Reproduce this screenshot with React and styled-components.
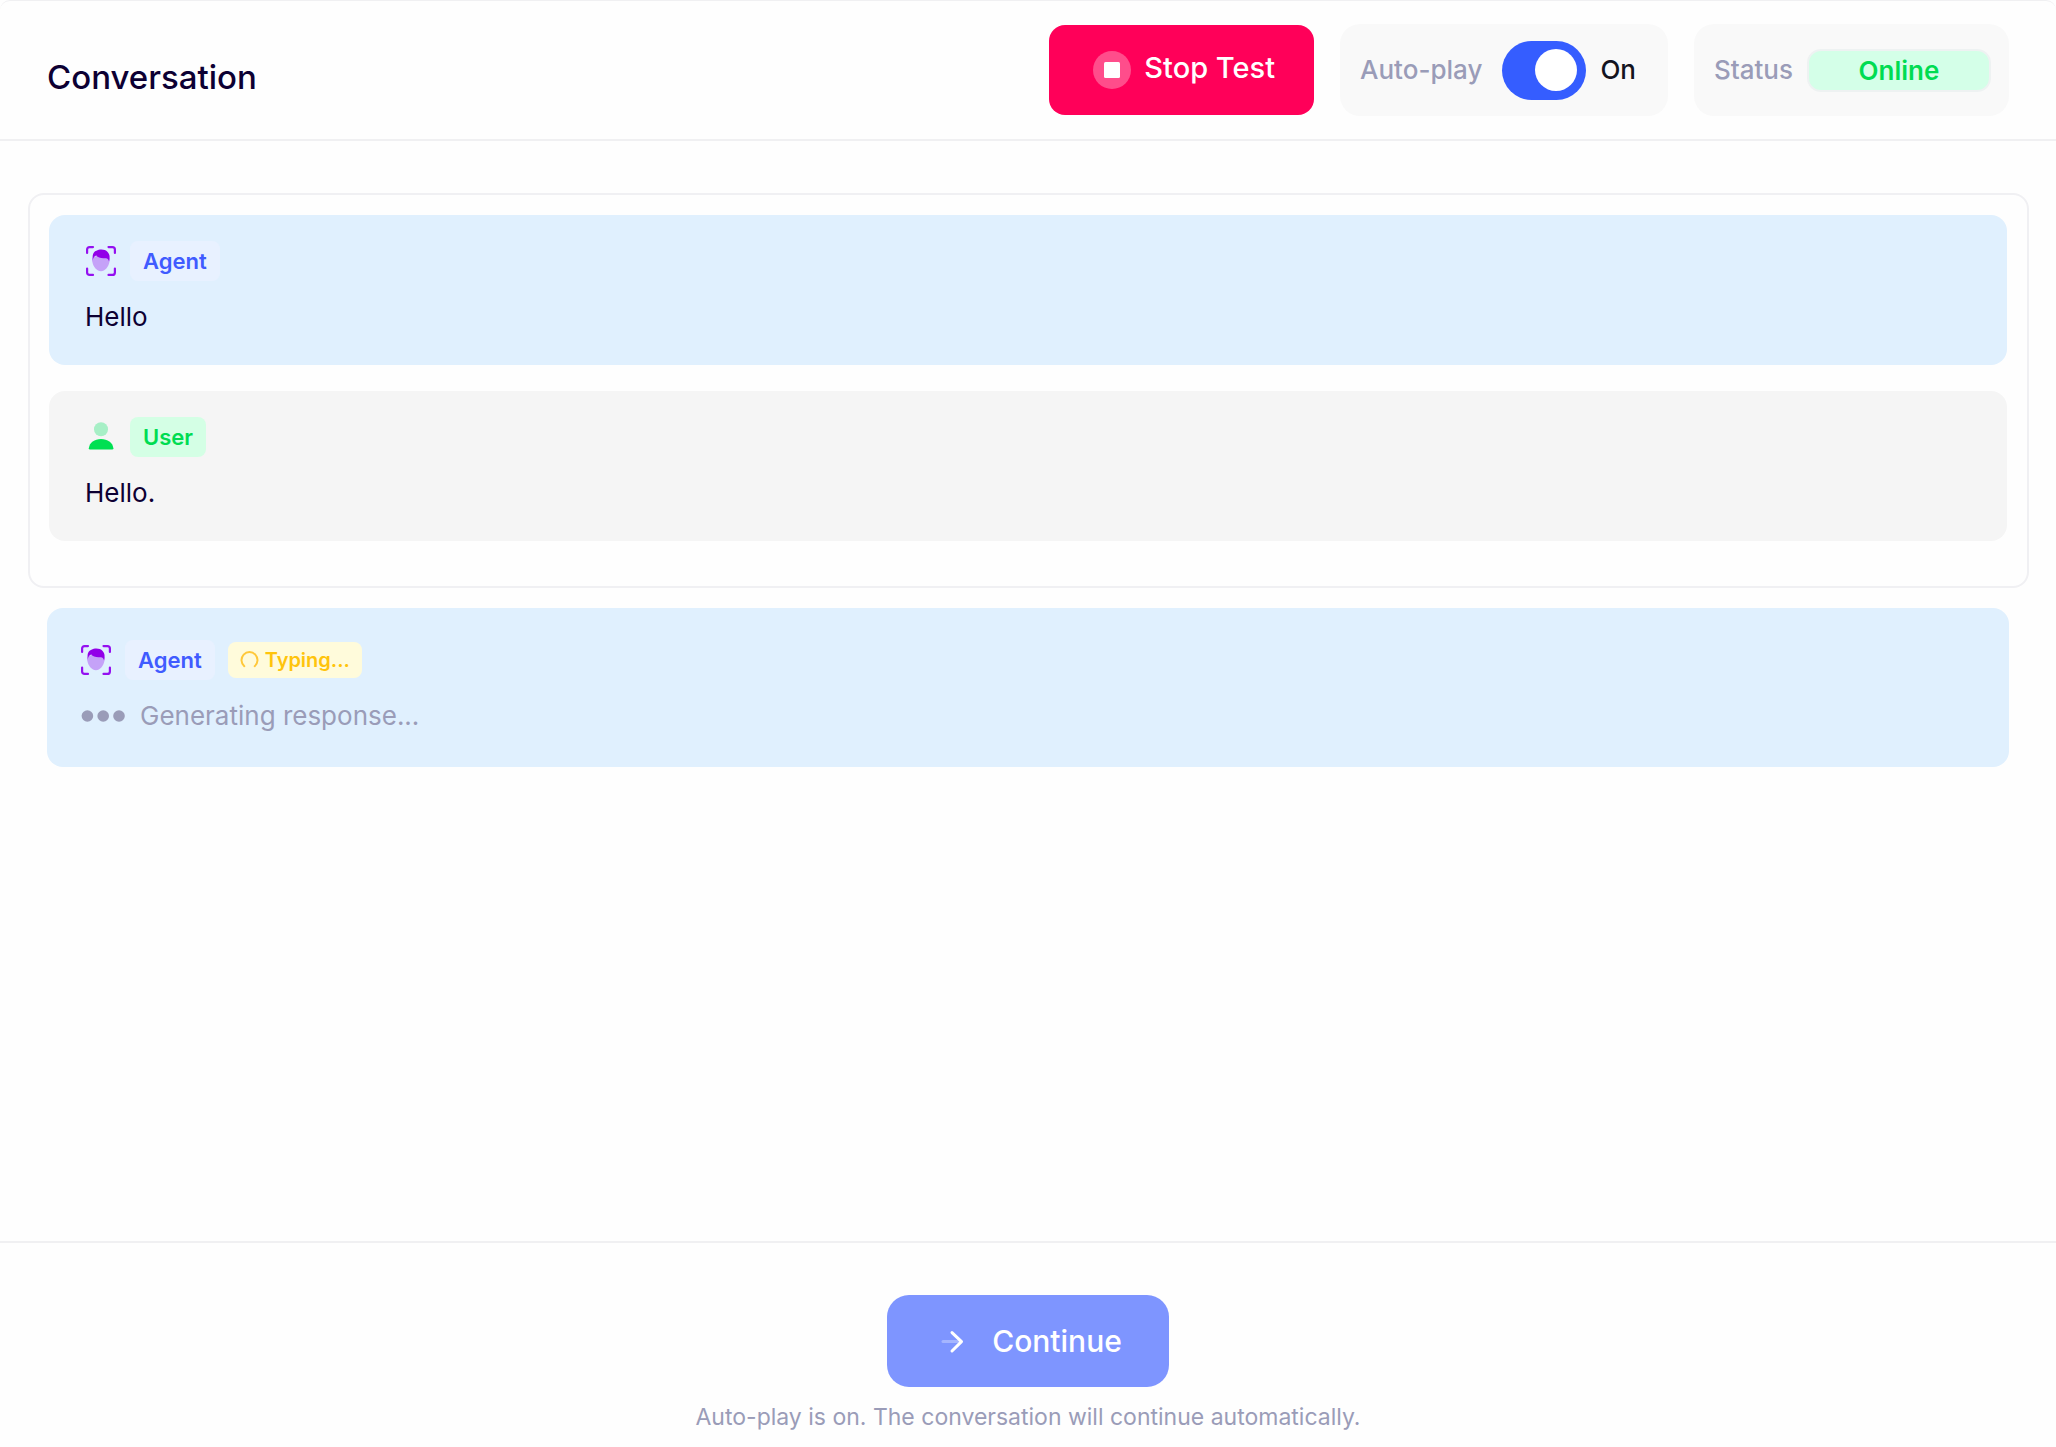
import React, { useState } from 'react';
import styled, { createGlobalStyle } from 'styled-components';

const GlobalStyle = createGlobalStyle`
  * {
    box-sizing: border-box;
  }
  body {
    margin: 0;
    background: #fefefe;
    color: #0d0033;
    font-family: Inter, "Liberation Sans", sans-serif;
  }
  button, input {
    font-family: inherit;
  }
`;

const Page = styled.div`
  display: flex;
  flex-direction: column;
  min-height: 100vh;
  border-top: 1px solid #f0f0f2;
  border-radius: 10px 10px 0 0;
`;

const Header = styled.header`
  display: flex;
  align-items: center;
  justify-content: space-between;
  padding: 23px 47px;
  border-bottom: 2px solid #f0f0f2;
`;

const Title = styled.h1`
  margin: 0;
  padding-top: 13px;
  font-size: 33px;
  font-weight: 500;
  line-height: 40px;
`;

const Controls = styled.div`
  display: flex;
  align-items: center;
  gap: 26px;
`;

const StopButton = styled.button`
  display: flex;
  align-items: center;
  gap: 13px;
  height: 90px;
  padding: 0 39px 0 44px;
  border: 0;
  border-radius: 16px;
  background: #ff0059;
  color: #fff;
  font-size: 29px;
  font-weight: 500;
  line-height: 40px;
`;

const StopLabel = styled.span`
  padding-bottom: 4px;
`;

const Panel = styled.div`
  display: flex;
  align-items: center;
  height: 92px;
  padding: 0 ${(props) => (props.$wide ? '32px' : '18px')} 0 20px;
  border-radius: 20px;
  background: #f9f9f9;
  font-size: 26px;
  font-weight: 500;
  line-height: 32px;
`;

const PanelLabel = styled.label`
  color: #9a9cb8;
`;

const Switch = styled.input`
  appearance: none;
  display: flex;
  align-items: center;
  justify-content: ${(props) => (props.checked ? 'flex-end' : 'flex-start')};
  width: 84px;
  height: 59px;
  margin: 0 14px 0 20px;
  padding: 9px;
  border-radius: 30px;
  background: ${(props) => (props.checked ? '#355dff' : '#c4cada')};

  &::before {
    content: '';
    width: 42px;
    height: 42px;
    border-radius: 50%;
    background: #fff;
  }
`;

const SwitchState = styled.span`
  color: #14141f;
`;

const StatusBadge = styled.output`
  width: 184px;
  margin-left: 14px;
  padding: 4px 0 3px;
  border: 2px solid #eef2f2;
  border-radius: 14px;
  background: #d4ffe8;
  color: #00dc52;
  font-weight: 600;
  text-align: center;
`;

const Main = styled.main`
  flex: 1;
  padding: 52px 27px 52px 28px;
`;

const History = styled.section`
  display: flex;
  flex-direction: column;
  gap: 26px;
  padding: 20px 20px 45px 19px;
  border: 2px solid #f0f0f3;
  border-radius: 16px;
`;

const Message = styled.article`
  padding: 26px 36px 28px;
  border-radius: 16px;
  background: ${(props) => (props.$agent ? '#e0f0fe' : '#f5f5f5')};
`;

const PendingMessage = styled(Message)`
  margin: 20px 20px 0 19px;
  padding: 32px 33px 31px;
`;

const MessageHead = styled.div`
  display: flex;
  align-items: center;
  gap: 13px;
  height: 40px;
  margin-bottom: 16px;
`;

const Tag = styled.span`
  display: flex;
  align-items: center;
  gap: 6px;
  padding: 6px 13px;
  border-radius: 8px;
  background: ${(props) => (props.$agent ? '#e8f1ff' : '#d4ffe5')};
  color: ${(props) => (props.$agent ? '#405bff' : '#00dc52')};
  font-size: 22px;
  font-weight: 600;
  line-height: 28px;
`;

const TypingTag = styled(Tag)`
  padding: 4px 12px;
  background: #fffbdb;
  color: #ffc40c;
  font-size: 20px;
`;

const MessageText = styled.p`
  display: flex;
  align-items: center;
  gap: 14px;
  margin: 0;
  color: ${(props) => (props.$muted ? '#9a9cb8' : '#0d0033')};
  font-size: 26px;
  line-height: 40px;
`;

const Footer = styled.footer`
  display: flex;
  flex-direction: column;
  align-items: center;
  padding: 52px 20px 14px;
  border-top: 2px solid #f0f0f2;
`;

const ContinueButton = styled.button`
  display: flex;
  align-items: center;
  gap: 18px;
  height: 92px;
  padding: 0 47px 0 45px;
  border: 0;
  border-radius: 22px;
  background: #7e95ff;
  color: #fff;
  font-size: 30px;
  font-weight: 500;
  line-height: 40px;
`;

const Hint = styled.p`
  margin: 14px 0 0;
  color: #9a9cb8;
  font-size: 23px;
  line-height: 32px;
`;

const StopIcon = () => (
  <svg width="38" height="38" viewBox="0 0 38 38" aria-hidden="true">
    <circle cx="19" cy="19" r="19" fill="#fff" opacity="0.3" />
    <rect x="11" y="11" width="16" height="16" rx="1.5" fill="#fff" />
  </svg>
);

const AgentIcon = () => (
  <svg width="32" height="32" viewBox="0 0 32 32" fill="none" aria-hidden="true">
    <g stroke="#9410f0" strokeWidth="2.2" strokeLinecap="round">
      <path d="M2.1 8V4.6Q2.1 2.1 4.6 2.1H8" />
      <path d="M23.5 2.1H27.4Q29.9 2.1 29.9 4.6V8" />
      <path d="M29.9 23.5V27.4Q29.9 29.9 27.4 29.9H23.5" />
      <path d="M8 29.9H4.6Q2.1 29.9 2.1 27.4V23.5" />
    </g>
    <path d="M8 12.5C7 13 6.6 15 7.4 17C8.2 22 12 26.2 16 26.2C20 26.2 23.6 22 24.4 17C25.3 15 25 13 24 12.5L16 9Z" fill="#c5a2f8" />
    <path d="M7.8 15C7 9 8.8 6.6 11.4 5.8C14.5 4 20 4 22.6 7C24.9 9.5 25 12 24 16.5C23.7 14.5 22.5 13 20.5 13.2C16.5 13.8 13 12.6 11.3 10.6C9.5 11 8.4 12.8 7.8 15Z" fill="#9200e8" />
  </svg>
);

const UserIcon = () => (
  <svg width="32" height="32" viewBox="0 0 32 32" aria-hidden="true">
    <circle cx="16" cy="8.3" r="7" fill="#a7efc6" />
    <path d="M3.8 27.2C4.6 21.5 9.5 18 16 18S27.6 21.5 28.4 27.2Q28.5 28.6 27.2 28.6H5Q3.7 28.6 3.8 27.2Z" fill="#00e052" />
  </svg>
);

const SpinnerIcon = () => (
  <svg width="19" height="20" viewBox="0 0 19 20" fill="none" aria-hidden="true">
    <path d="M4.3 16.2A8 8 0 1 1 14.7 16.2" stroke="#ffc83a" strokeWidth="2" strokeLinecap="round" />
  </svg>
);

const DotsIcon = () => (
  <svg width="46" height="12" viewBox="0 0 46 12" fill="#9a9cb8" aria-hidden="true">
    <circle cx="7.4" cy="6" r="5.8" />
    <circle cx="23.2" cy="6" r="5.8" />
    <circle cx="39" cy="6" r="5.8" />
  </svg>
);

const ArrowIcon = () => (
  <svg width="42" height="42" viewBox="0 0 42 42" fill="none" stroke="#fff" strokeWidth="3" strokeLinecap="round" strokeLinejoin="round" aria-hidden="true">
    <path d="M11 21.6H27" opacity="0.3" />
    <path d="M20 12.6L29.5 21.6L20 31" />
  </svg>
);

const messages = [
  { id: 1, role: 'Agent', text: 'Hello' },
  { id: 2, role: 'User', text: 'Hello.' }
];

function ChatMessage({ role, text }) {
  const isAgent = role === 'Agent';
  return (
    <Message $agent={isAgent}>
      <MessageHead>
        {isAgent ? <AgentIcon /> : <UserIcon />}
        <Tag $agent={isAgent}>{role}</Tag>
      </MessageHead>
      <MessageText>{text}</MessageText>
    </Message>
  );
}

function App() {
  const [autoPlay, setAutoPlay] = useState(true);

  return (
    <>
      <GlobalStyle />
      <Page>
        <Header>
          <Title>Conversation</Title>
          <Controls>
            <StopButton type="button">
              <StopIcon />
              <StopLabel>Stop Test</StopLabel>
            </StopButton>
            <Panel $wide>
              <PanelLabel htmlFor="autoPlay">Auto-play</PanelLabel>
              <Switch
                id="autoPlay"
                type="checkbox"
                role="switch"
                checked={autoPlay}
                onChange={() => setAutoPlay((prevState) => !prevState)}
              />
              <SwitchState>{autoPlay ? 'On' : 'Off'}</SwitchState>
            </Panel>
            <Panel>
              <PanelLabel htmlFor="status">Status</PanelLabel>
              <StatusBadge id="status">Online</StatusBadge>
            </Panel>
          </Controls>
        </Header>
        <Main>
          <History>
            {messages.map((message) => (
              <ChatMessage key={message.id} role={message.role} text={message.text} />
            ))}
          </History>
          <PendingMessage $agent>
            <MessageHead>
              <AgentIcon />
              <Tag $agent>Agent</Tag>
              <TypingTag><SpinnerIcon />Typing...</TypingTag>
            </MessageHead>
            <MessageText $muted><DotsIcon />Generating response...</MessageText>
          </PendingMessage>
        </Main>
        <Footer>
          <ContinueButton type="button"><ArrowIcon />Continue</ContinueButton>
          <Hint>Auto-play is on. The conversation will continue automatically.</Hint>
        </Footer>
      </Page>
    </>
  );
}

export default App;
